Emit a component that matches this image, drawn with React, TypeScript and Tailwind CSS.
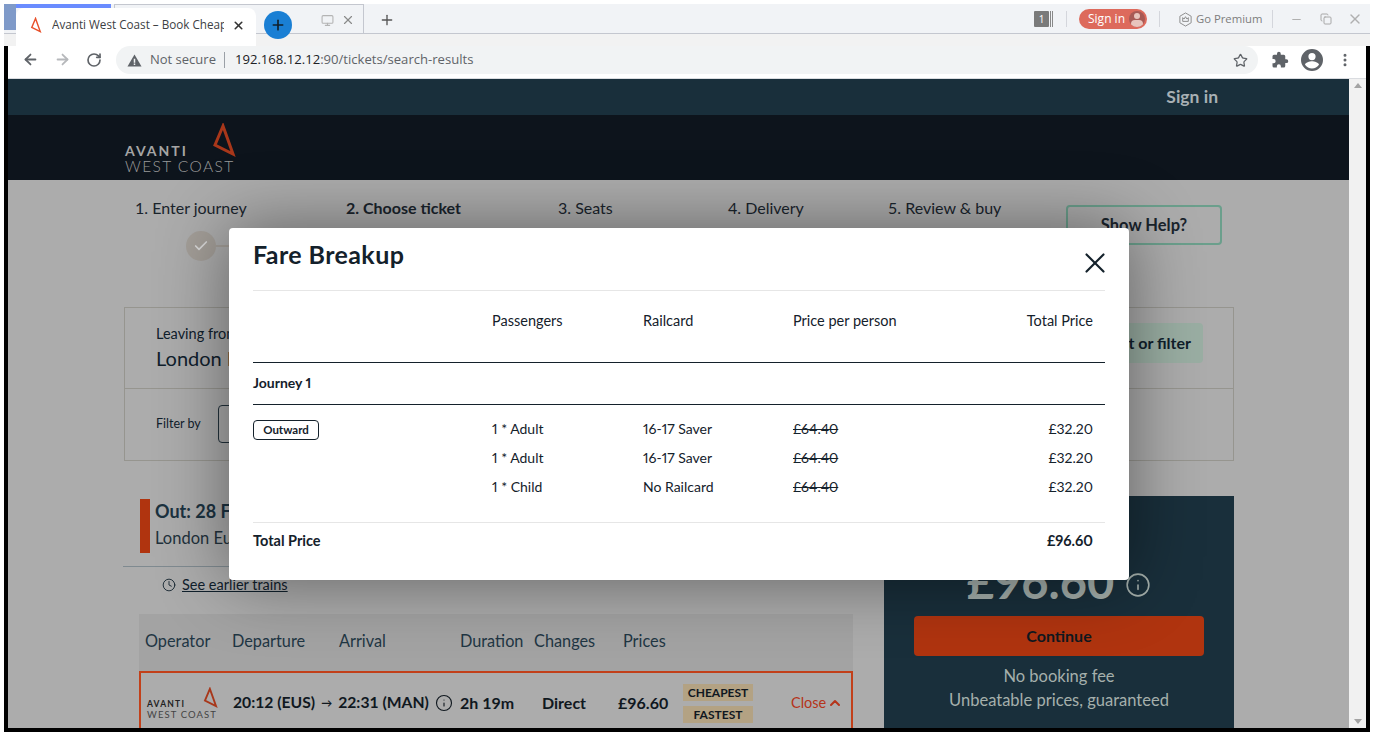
import React from 'react';
import { ArrowLeft, ArrowRight, ChevronUp, Clock, Info, MoreVertical, Plus, RotateCw, Star, X, Check, Monitor, Minus, Copy } from 'lucide-react';

const fareRows = [
  { passenger: '1 * Adult', railcard: '16-17 Saver' },
  { passenger: '1 * Adult', railcard: '16-17 Saver' },
  { passenger: '1 * Child', railcard: 'No Railcard' },
];

const steps = [
  { label: '1. Enter journey', width: 'w-[211px]', bold: false },
  { label: '2. Choose ticket', width: 'w-[212px]', bold: true },
  { label: '3. Seats', width: 'w-[170px]', bold: false },
  { label: '4. Delivery', width: 'w-[160px]', bold: false },
  { label: '5. Review & buy', width: 'w-[178px]', bold: false },
];

const Mark = ({ className }: { className: string }) => (
  <svg viewBox="0 0 24 34" className={className} fill="none">
    <path d="M11 3 L3 22 L21 31 Z" stroke="currentColor" strokeWidth="3" strokeLinejoin="miter" />
  </svg>
);

const Puzzle = () => (
  <svg viewBox="0 0 24 24" className="w-[18px] h-[18px]" fill="#5f6368">
    <path d="M20.5 11H19V7a2 2 0 0 0-2-2h-4V3.5a2.5 2.5 0 0 0-5 0V5H4a2 2 0 0 0-2 2v3.8h1.5a2.7 2.7 0 0 1 0 5.4H2V20a2 2 0 0 0 2 2h3.8v-1.5a2.7 2.7 0 0 1 5.4 0V22H17a2 2 0 0 0 2-2v-4h1.5a2.5 2.5 0 0 0 0-5z" />
  </svg>
);

const Account = () => (
  <svg viewBox="0 0 24 24" className="w-[24px] h-[24px]" fill="#5f6368">
    <path d="M12 1a11 11 0 1 0 0 22 11 11 0 0 0 0-22zm0 4a3.6 3.6 0 1 1 0 7.2A3.6 3.6 0 0 1 12 5zm0 15.4a8.6 8.6 0 0 1-7-3.6c.1-2.3 4.7-3.6 7-3.6s6.9 1.300 7 3.600a8.600 8.600 0 0 1-7 3.600z" />
  </svg>
);

const Warning = () => (
  <svg viewBox="0 0 16 16" className="w-[15px] h-[15px]">
    <path d="M8 1.500 15.500 14.500H.5z" fill="#5f6368" />
    <path d="M7.200 6h1.600v4.500H7.200zM7.200 11.300h1.600v1.500H7.200z" fill="#f1f3f4" />
  </svg>
);

const BrowserChrome = () => (
  <div className="font-['Open_Sans',sans-serif]">
    <div className="h-[42px] bg-[#f2f2f2]">
      <div className="relative h-[30px] bg-[#f1f3f6] border-b border-[#c4c7cf] flex items-start">
        <div className="absolute left-0 top-0 w-[107px] h-[4px] bg-[#6a8cff]" />
        <div className="absolute left-0 top-0 w-[12px] h-[26px] bg-[#7f9ac9]" />
        <div className="absolute left-[110px] top-0 w-[250px] h-[30px] border-l border-r border-t border-[#c4c7cf]" />
        <div className="relative ml-[12px] mt-[4px] w-[240px] h-[38px] bg-white rounded-t-lg flex items-center pl-[14px] pr-[11px] pb-[4px] text-[11.700px] text-[#3c4043]">
          <Mark className="w-[12px] h-[16px] text-[#e8502a] shrink-0" />
          <span className="ml-[10px] w-[172px] whitespace-nowrap overflow-hidden">Avanti West Coast – Book Cheap Train</span>
          <X className="ml-auto w-[13px] h-[13px] text-[#333]" strokeWidth={3} />
        </div>
        <div className="relative ml-[8px] mt-[7px] w-[28px] h-[28px] rounded-full bg-[#1a7fd4] flex items-center justify-center">
          <Plus className="w-[16px] h-[16px] text-[#10202c]" strokeWidth={2.5} />
        </div>
        <Monitor className="ml-[29px] mt-[10px] w-[13px] h-[13px] text-[#b4b4b4]" />
        <X className="ml-[7px] mt-[9px] w-[14px] h-[14px] text-[#8a8a8a]" />
        <Plus className="ml-[24px] mt-[8px] w-[16px] h-[16px] text-[#555]" strokeWidth={2} />
        <div className="ml-auto flex items-center h-[30px] pr-[7px] text-[12px]">
          <div className="w-[15px] h-[16px] bg-[#7a7a7a] rounded-[1px] text-white text-[10px] flex items-center justify-center">1</div>
          <div className="ml-[1px] w-[3px] h-[16px] border-l border-r border-[#888]" />
          <div className="ml-[13px] w-px h-[16px] bg-[#d4d6dc]" />
          <div className="ml-[12px] w-[68px] h-[20px] rounded-full bg-[#dd6a5c] text-white flex items-center pl-[9px] justify-between pr-[2px]">
            <span>Sign in</span>
            <span className="relative w-[16px] h-[16px] rounded-full bg-[#a85a55] overflow-hidden">
              <span className="absolute left-[5px] top-[2px] w-[6px] h-[6px] rounded-full bg-[#e8c4bc]" />
              <span className="absolute left-[2px] top-[9px] w-[12px] h-[8px] rounded-full bg-[#e8c4bc]" />
            </span>
          </div>
          <div className="ml-[12px] w-px h-[16px] bg-[#d4d6dc]" />
          <svg viewBox="0 0 16 16" className="ml-[18px] w-[15px] h-[15px]" fill="none" stroke="#8a8a8a" strokeWidth="1">
            <path d="M8 1 14 4.500v7L8 15l-6-3.500v-7z" />
            <path d="M5 6l1.500 1.500L8 5l1.500 2.500L11 6v4H5z" />
          </svg>
          <span className="ml-[3px] w-[67px] whitespace-nowrap text-[11.300px] text-[#7d7d7d]">Go Premium</span>
          <div className="ml-[9px] w-px h-[18px] bg-[#d4d6dc]" />
          <Minus className="ml-[17px] w-[13px] h-[13px] text-[#b0b0b0]" />
          <Copy className="ml-[17px] w-[12px] h-[12px] text-[#a8a8a8]" />
          <X className="ml-[15px] w-[16px] h-[16px] text-[#b0b0b0]" />
        </div>
      </div>
    </div>
    <div className="h-[33px] bg-black px-[4px]">
      <div className="h-full bg-white border-b border-[#dadce0] flex items-start pr-[13px]">
        <ArrowLeft className="ml-[14px] mt-[5px] w-[17px] h-[17px] text-[#5f6368]" strokeWidth={2.5} />
        <ArrowRight className="ml-[15px] mt-[5px] w-[17px] h-[17px] text-[#b6b8bb]" strokeWidth={2.5} />
        <RotateCw className="ml-[15px] mt-[6px] w-[16px] h-[16px] text-[#5f6368]" strokeWidth={2.5} />
        <div className="ml-[14px] flex-1 h-[28px] rounded-full bg-[#f1f3f4] flex items-center pl-[11px] pr-[10px] text-[13px]">
          <Warning />
          <span className="ml-[8px] text-[#5f6368]">Not secure</span>
          <span className="ml-[8px] w-px h-[16px] bg-[#9aa0a6]" />
          <span className="ml-[10px] text-[13.100px] text-[#202124]">192.168.12.12<span className="text-[#5f6368]">:90/tickets/search-results</span></span>
          <Star className="ml-auto w-[15px] h-[15px] text-[#5f6368]" />
        </div>
        <div className="ml-[13px] mt-[5px]"><Puzzle /></div>
        <div className="ml-[11px] mt-[2px]"><Account /></div>
        <MoreVertical className="ml-[13px] mt-[6px] w-[16px] h-[16px] text-[#5f6368]" strokeWidth={2.5} />
      </div>
    </div>
  </div>
);

const PageBehind = () => (
  <div className="flex-1 min-w-0 bg-[#acacac] overflow-hidden text-[#10202c]">
    <div className="h-[36px] bg-[#192f3b] flex items-center justify-end pr-[131px] text-[#a8b0b4] text-[17.500px] font-bold">Sign in</div>
    <div className="h-[65px] bg-[#0d141c] pl-[117px] pt-[9px]">
      <div className="relative w-[110px] h-[50px] text-[#a5a5a5]">
        <div className="pt-[20px] text-[14px] leading-[14px] font-bold tracking-[2px]">AVANTI</div>
        <div className="-mt-px pt-[1px] text-[15.500px] leading-[16px] tracking-[1.400px] font-light text-[#9a9a9a] whitespace-nowrap">WEST COAST</div>
        <Mark className="absolute -right-[1px] top-[-1px] w-[24px] h-[34px] text-[#a8371a]" />
      </div>
    </div>

    <div className="relative h-[548px] pl-[116px] pr-[115px]">
      <div className="flex pt-[18px] pl-[11px] text-[16px] leading-[20px] text-[#1a242c]">
        {steps.map((s) => (
          <div key={s.label} className={`${s.width} ${s.bold ? 'font-bold' : ''}`}>{s.label}</div>
        ))}
        <div className="mt-[7px] shrink-0 w-[156px] h-[40px] border-2 border-[#6b9f8c] rounded-[4px] flex items-center justify-center text-[16.500px] font-bold">Show Help?</div>
      </div>
      <div className="ml-[62px] -mt-[14px] flex items-center">
        <div className="w-[30px] h-[30px] rounded-full bg-[#a39e98] flex items-center justify-center">
          <Check className="w-[16px] h-[16px] text-[#d8d8d8]" strokeWidth={2.5} />
        </div>
        <div className="w-[40px] h-[2px] bg-[#a39e98]" />
      </div>

      <div className="mt-[46px] h-[154px] border border-[#96958f]">
        <div className="h-[81px] border-b border-[#96958f] flex items-center pl-[31px] pr-[30px]">
          <div>
            <div className="text-[14.500px] leading-[20px]">Leaving from</div>
            <div className="text-[20px] leading-[28px]">London Euston</div>
          </div>
          <div className="ml-auto -mt-[10px] w-[150px] h-[40px] rounded-[4px] bg-[#9aaea3] flex items-center justify-end pr-[12px] text-[16px] font-bold">Sort or filter</div>
        </div>
        <div className="flex items-center pl-[31px] pt-[16px]">
          <span className="text-[12.500px]">Filter by</span>
          <div className="ml-[17px] w-[120px] h-[38px] border border-[#22323c] rounded-[4px]" />
        </div>
      </div>

      <div className="flex mt-[35px]">
        <div className="w-[729px] -ml-px shrink-0">
          <div className="ml-[17px] mt-[3px] h-[54px] border-l-[10px] border-[#b0340f] pl-[5px] pt-[0px]">
            <div className="text-[18px] leading-[24px] font-bold text-[#1b3240]">Out: 28 February</div>
            <div className="text-[16.500px] leading-[30px] text-[#22323c]">London Euston</div>
          </div>
          <div className="mt-[13px] h-px bg-[#7f8a90]" />
          <div className="ml-[39px] mt-[10px] h-[16px] flex items-center text-[14.500px]">
            <Clock className="w-[14px] h-[14px]" strokeWidth={1.500} />
            <span className="ml-[6px] underline">See earlier trains</span>
          </div>
          <div className="ml-[16px] mt-[21px] w-[714px] h-[57px] bg-[#a3a3a3] grid grid-cols-[87px_107px_121px_74px_89px_1fr] pl-[6px] pb-[2px] items-center text-[16.300px] text-[#1f3644]">
            <span>Operator</span><span>Departure</span><span>Arrival</span><span>Duration</span><span>Changes</span><span>Prices</span>
          </div>
          <div className="ml-[16px] w-[714px] h-[70px] border-2 border-[#c2401a] flex items-start pl-[6px] pt-[11px] text-[#10181f]">
            <div className="relative w-[70px] h-[36px] mt-[3px] text-[#222]">
              <div className="pt-[13px] text-[8.500px] leading-[9px] font-bold tracking-[1.200px]">AVANTI</div>
              <div className="text-[9.500px] leading-[11px] tracking-[1.100px] text-[#444] whitespace-nowrap">WEST COAST</div>
              <Mark className="absolute -right-px top-0 w-[15px] h-[21px] text-[#a8371a]" />
            </div>
            <div className="ml-[16px] w-[227px] flex items-center h-[24px] mt-[7px] text-[15.700px] font-bold whitespace-nowrap">
              20:12 (EUS)<span className="mx-[6px] text-[11px]">→</span>22:31 (MAN)
              <Info className="ml-[6px] w-[18px] h-[18px]" strokeWidth={1.500} />
            </div>
            <div className="w-[82px] mt-[7px] leading-[24px] text-[16px] font-bold">2h 19m</div>
            <div className="w-[76px] mt-[7px] leading-[24px] text-[16px] font-bold">Direct</div>
            <div className="w-[65px] mt-[7px] leading-[24px] text-[16px] font-bold">£96.60</div>
            <div className="w-[108px] flex flex-col gap-[5px] text-[12px] font-bold">
              <span className="w-[70px] h-[17px] bg-[#b3a283] flex items-center justify-center">CHEAPEST</span>
              <span className="w-[70px] h-[17px] bg-[#b3a283] flex items-center justify-center">FASTEST</span>
            </div>
            <div className="mt-[7px] h-[24px] flex items-center text-[14.500px] text-[#b5341a]">
              Close<ChevronUp className="ml-px w-[16px] h-[16px]" strokeWidth={3} />
            </div>
          </div>
        </div>
        <div className="ml-[32px] w-[350px] h-[240px] bg-[#192f3b] flex flex-col items-center text-[#a5b0ac]">
          <div className="mt-[57px] h-[56px] flex items-center">
            <span className="text-[47px] leading-[56px] font-bold">£96.60</span>
            <Info className="ml-[11px] mt-[8px] w-[26px] h-[26px]" strokeWidth={1.500} />
          </div>
          <div className="mt-[7px] w-[290px] h-[40px] rounded-[4px] bg-[#b0340f] flex items-center justify-center text-[16px] font-bold text-[#10181f]">Continue</div>
          <div className="mt-[8px] text-[16.500px] leading-[24px]">No booking fee</div>
          <div className="text-[16.500px] leading-[24px]">Unbeatable prices, guaranteed</div>
        </div>
      </div>
    </div>
  </div>
);

const FareModal = () => (
  <div className="absolute left-[229px] top-[228px] w-[900px] h-[352px] bg-white rounded-[4px] px-[24px] shadow-[0_0_70px_rgba(0,0,0,0.45)] text-[#14212b] text-[14.500px] proportional-nums">
    <div className="h-[63px] border-b border-[#e6e6e6] flex items-start justify-between">
      <h2 className="mt-[10px] text-[25px] leading-[32px] font-bold tracking-[.4px]">Fare Breakup</h2>
      <X className="mt-[18px] -mr-[7px] w-[34px] h-[34px]" strokeWidth={1.500} />
    </div>
    <div className="h-[71px] grid grid-cols-[239px_151px_150px_1fr_auto] pr-[12px] pt-[20px] leading-[20px]">
      <span /><span>Passengers</span><span>Railcard</span><span>Price per person</span><span>Total Price</span>
    </div>
    <div className="h-[43px] border-y border-[#14212b] flex items-center pb-[2px] text-[14px] font-bold">Journey 1</div>
    <div className="mt-[14px] grid grid-cols-[239px_151px_150px_1fr_auto] pr-[12px] auto-rows-[29px] leading-[20px] text-[14px]">
      {fareRows.map((r, i) => (
        <React.Fragment key={i}>
          <span>
            {i === 0 && <span className="inline-flex -mt-px w-[66px] h-[20px] border border-[#14212b] rounded-[4px] items-center justify-center text-[11.500px] font-bold">Outward</span>}
          </span>
          <span>{r.passenger}</span>
          <span>{r.railcard}</span>
          <span className="line-through">£64.40</span>
          <span>£32.20</span>
        </React.Fragment>
      ))}
    </div>
    <div className="mt-[16px] h-[39px] border-t border-[#e6e6e6] flex items-center justify-between pr-[12px] pb-[2px] font-bold">
      <span>Total Price</span><span>£96.60</span>
    </div>
  </div>
);

export default function App() {
  return (
    <div className="relative w-[1374px] h-[736px] bg-white overflow-hidden pt-[4px] px-[4px] font-['Lato',sans-serif]">
      <BrowserChrome />
      <div className="h-[653px] bg-black pl-[4px] pr-[4px] pb-[4px] flex">
        <PageBehind />
        <div className="w-[17px] bg-[#f1f1f1] flex flex-col items-center justify-between py-[4px] text-[#a3a3a3]">
          <div className="w-0 h-0 border-x-[4px] border-x-transparent border-b-[5px] border-b-[#a3a3a3]" />
          <div className="w-0 h-0 border-x-[4px] border-x-transparent border-t-[5px] border-t-[#a3a3a3]" />
        </div>
      </div>
      <FareModal />
    </div>
  );
}
